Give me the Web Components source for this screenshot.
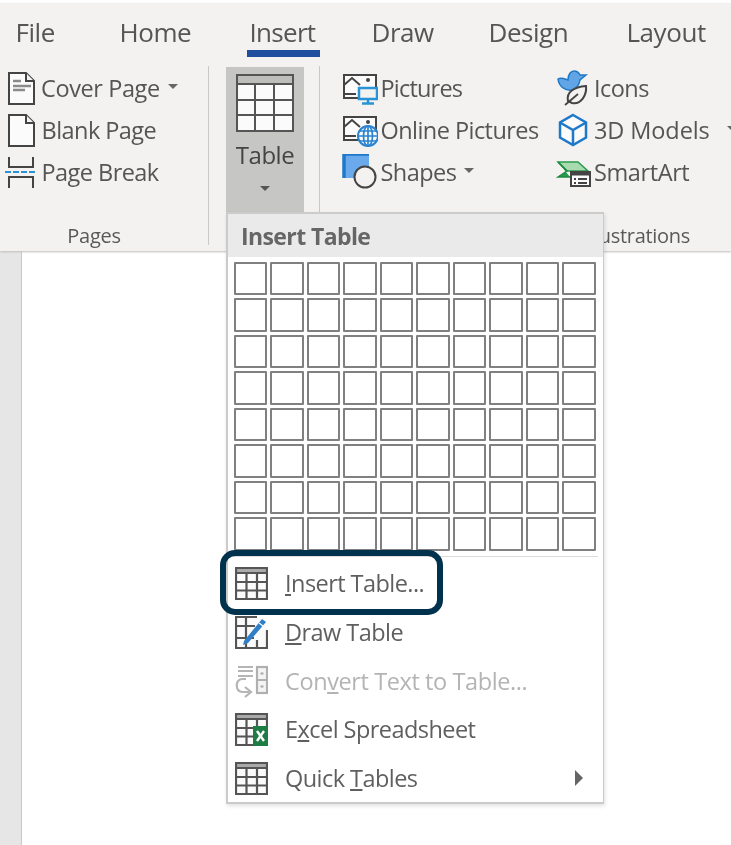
<!DOCTYPE html>
<html lang="en">
<head>
<meta charset="utf-8">
<title>Insert Table</title>
<style>
  html, body { margin: 0; background: #fff; }
  body { font-family: "Open Sans", "Noto Sans", "Liberation Sans", sans-serif; }
</style>
</head>
<body>
<word-app>
  <word-ribbon slot="ribbon">
    <ribbon-tab style="--w:104px">File</ribbon-tab>
    <ribbon-tab style="--w:130px">Home</ribbon-tab>
    <ribbon-tab style="--w:122px;--track:-.7px" active>Insert</ribbon-tab>
    <ribbon-tab style="--w:117px">Draw</ribbon-tab>
    <ribbon-tab style="--w:138px">Design</ribbon-tab>
    <ribbon-tab style="--w:90px">Layout</ribbon-tab>

    <ribbon-group slot="groups" label="Pages" style="--w:208px;--pad:5px;--col:auto" divider>
      <ribbon-item caret style="--icon:36px;--track:-.4px">
        <svg slot="icon" width="32" height="36" viewBox="0 0 32 36"><path d="M4 3h17l8 8v23H4z" fill="#fbfbfb" stroke="#444" stroke-width="2"/><path d="M21 3v8h8" fill="#f3f2f1" stroke="#444" stroke-width="2"/><path d="M8 11h8M8 16h18M8 20h12" stroke="#8a8a8a" stroke-width="2.5" fill="none"/></svg>
        Cover Page
      </ribbon-item>
      <ribbon-item style="--icon:36.500px">
        <svg slot="icon" width="32" height="36" viewBox="0 0 32 36"><path d="M4 3h17l8 8v23H4z" fill="#fbfbfb" stroke="#444" stroke-width="2"/><path d="M21 3v8h8" fill="#f3f2f1" stroke="#444" stroke-width="2"/></svg>
        Blank Page
      </ribbon-item>
      <ribbon-item style="--icon:36.500px">
        <svg slot="icon" width="32" height="36" viewBox="0 0 32 36"><path d="M4 3v10h24V3M4 34V23h24v11" fill="none" stroke="#444" stroke-width="2"/><path d="M0 18h31" stroke="#2a93d5" stroke-width="2" stroke-dasharray="6 2" fill="none"/></svg>
        Page Break
      </ribbon-item>
    </ribbon-group>

    <ribbon-group slot="groups" style="--w:110px;--pad:17px;--col:auto" divider>
      <table-button>Table</table-button>
    </ribbon-group>

    <ribbon-group slot="groups" label="Illustrations" style="--w:411px;--pad:22px;--col:214px auto;--label-end:41px">
      <ribbon-item style="--icon:38.500px;--track:-.8px">
        <svg slot="icon" width="36" height="36" viewBox="0 0 36 36"><path d="M2 5h32v23H2z" fill="#fbfbfb" stroke="#444" stroke-width="2"/><path d="M2 15l8-7 8 7M2 24h12" fill="none" stroke="#444" stroke-width="2"/><circle cx="26" cy="10" r="2" fill="#444"/><path d="M17 18h18v11H17z" fill="#f3f2f1" stroke="#2a93d5" stroke-width="2.5"/><path d="M26 29v4M20 33.500h12" stroke="#2a93d5" stroke-width="2.500" fill="none"/></svg>
        Pictures
      </ribbon-item>
      <ribbon-item style="--icon:38px">
        <svg slot="icon" width="36" height="36" viewBox="0 0 36 36"><path d="M2 9c3-2 7 0 10 1 0-6 3-9 6-9 3 0 5 2 6 4h6l-6 5c-1 6-5 9-8 10-8 1-13-4-14-11z" fill="#62a5e6" stroke="#1f78c8" stroke-width="1.500"/><path d="M12 31c-2-9 6-14 18-15 1 9-5 19-14 17z" fill="#f3f2f1" stroke="#444" stroke-width="2"/><path d="M9 35l13-11" stroke="#444" stroke-width="1.800"/></svg>
        Icons
      </ribbon-item>
      <ribbon-item style="--icon:38.500px">
        <svg slot="icon" width="36" height="36" viewBox="0 0 36 36"><path d="M2 5h32v23H2z" fill="#fbfbfb" stroke="#444" stroke-width="2"/><path d="M2 15l8-7 8 7M2 24h12" fill="none" stroke="#444" stroke-width="2"/><circle cx="26" cy="10" r="2" fill="#444"/><circle cx="26" cy="24" r="10" fill="#fbfbfb" stroke="#2a83d0" stroke-width="2"/><path d="M16 24h20M26 14v20M18 19h16M18 29h16" stroke="#2a83d0" stroke-width="1.700" fill="none"/><ellipse cx="26" cy="24" rx="4.500" ry="10" fill="none" stroke="#2a83d0" stroke-width="1.700"/></svg>
        Online Pictures
      </ribbon-item>
      <ribbon-item caret style="--icon:38px;--track:-.1px;--caret-gap:17px">
        <svg slot="icon" width="36" height="36" viewBox="0 0 36 36"><path d="M17 3L30 10.500V25.500L17 33L4 25.500V10.500z" fill="#fbfbfb" stroke="#1f78c8" stroke-width="2.500"/><path d="M4 10.500L17 18l13-7.500M17 18v15" fill="none" stroke="#1f78c8" stroke-width="2.500"/></svg>
        3D Models
      </ribbon-item>
      <ribbon-item caret style="--icon:38.500px">
        <svg slot="icon" width="36" height="36" viewBox="0 0 36 36"><path d="M2 0h25v24H2z" fill="#6aa9ec"/><path d="M2 0h25M2 0v24" stroke="#1f78c8" stroke-width="3.500" fill="none"/><circle cx="23" cy="23" r="10.500" fill="#f3f2f1" stroke="#444" stroke-width="2"/></svg>
        Shapes
      </ribbon-item>
      <ribbon-item style="--icon:38px;--track:-.4px">
        <svg slot="icon" width="36" height="36" viewBox="0 0 36 36"><path d="M2 8h20l10 9H11z" fill="#a8dcb0" stroke="#2a9a4d" stroke-width="1.500"/><path d="M2 8l9 9-9 6h12" fill="#2a9a4d" stroke="#1e8a3f" stroke-width="1.500"/><rect x="15" y="18" width="19" height="14" fill="#fbfbfb" stroke="#444" stroke-width="2"/><path d="M15 20h19" stroke="#444" stroke-width="3"/><path d="M18 25h2M22 25h9M18 29h2M22 29h9" stroke="#444" stroke-width="1.800"/></svg>
        SmartArt
      </ribbon-item>
    </ribbon-group>
  </word-ribbon>

  <insert-menu>
    <menu-item callout>
      <menu-glyph slot="icon" kind="table"></menu-glyph>
      <u>I</u>nsert Table...
    </menu-item>
    <menu-item>
      <menu-glyph slot="icon" kind="draw"></menu-glyph>
      <u>D</u>raw Table
    </menu-item>
    <menu-item disabled style="--track:-.4px">
      <menu-glyph slot="icon" kind="convert"></menu-glyph>
      Con<u>v</u>ert Text to Table...
    </menu-item>
    <menu-item>
      <menu-glyph slot="icon" kind="excel"></menu-glyph>
      E<u>x</u>cel Spreadsheet
    </menu-item>
    <menu-item submenu>
      <menu-glyph slot="icon" kind="table"></menu-glyph>
      Quick <u>T</u>ables
    </menu-item>
  </insert-menu>
</word-app>

<script>
function shadow(el, html) {
  el.attachShadow({ mode: 'open' }).innerHTML = html;
}

window.customElements.define('word-app', class extends HTMLElement {
  constructor() {
    super();
    shadow(this, `<style>
  :host {
    display: block;
    position: relative;
    overflow: hidden;
    width: 731px;
    height: 845px;
    padding-top: 3px;
    box-sizing: border-box;
    background: #fff;
    filter: blur(.3px);
  }
  .doc {
    display: flex;
    height: 594px;
  }
  .gutter {
    width: 21px;
    background: #e6e6e6;
    border-right: 1px solid #c8c8c8;
  }
</style>
<slot name="ribbon"></slot>
<div class="doc"><div class="gutter"></div></div>
<slot></slot>`);
  }
});

window.customElements.define('word-ribbon', class extends HTMLElement {
  constructor() {
    super();
    shadow(this, `<style>
  :host {
    display: block;
    height: 248px;
    background: #f3f2f1;
    box-shadow: 0 1px 2px #bdbdbd;
    position: relative;
  }
  .tabs {
    display: flex;
    height: 54px;
    padding-left: 16px;
  }
  .groups {
    display: flex;
    padding-top: 9px;
    height: 176px;
  }
</style>
<div class="tabs"><slot></slot></div>
<div class="groups"><slot name="groups"></slot></div>`);
  }
});

window.customElements.define('ribbon-tab', class extends HTMLElement {
  constructor() {
    super();
    shadow(this, `<style>
  :host {
    display: block;
    position: relative;
    flex: none;
    width: var(--w);
    font-size: 26px;
    line-height: 30px;
    letter-spacing: var(--track, -.45px);
    padding-top: 14px;
    margin-left: -.5px;
    margin-right: .5px;
    color: #555;
  }
  :host([active])::after {
    content: "";
    position: absolute;
    left: -2.500px;
    top: 47px;
    width: 73px;
    height: 7px;
    background: #1f4e9c;
  }
</style>
<slot></slot>`);
  }
});

window.customElements.define('ribbon-group', class extends HTMLElement {
  static get observedAttributes() { return ['label']; }
  constructor() {
    super();
    shadow(this, `<style>
  :host {
    display: flex;
    flex-direction: column;
    flex: none;
    box-sizing: border-box;
    width: var(--w);
    height: 179px;
    position: relative;
  }
  :host([divider]) {
    border-right: 1px solid #c8c8c6;
    width: calc(var(--w) + 1px);
  }
  .body {
    flex: 1;
    display: grid;
    grid-template-columns: var(--col);
    grid-template-rows: repeat(3, 42px);
    padding: 1px 0 0 var(--pad);
    align-content: start;
    grid-auto-flow: row;
  }
  .label {
    font-size: 20px;
    line-height: 28px;
    letter-spacing: -.3px;
    color: #595959;
    text-align: center;
    padding-right: var(--label-end, 20px);
    margin-bottom: -5px;
  }
  :host([label="Illustrations"]) .label { text-align: right; }
</style>
<div class="body"><slot></slot></div>
<div class="label"></div>`);
  }
  attributeChangedCallback(name, old, value) {
    this.shadowRoot.querySelector('.label').textContent = value;
  }
});

window.customElements.define('ribbon-item', class extends HTMLElement {
  constructor() {
    super();
    shadow(this, `<style>
  :host {
    display: flex;
    align-items: center;
    height: 42px;
    white-space: nowrap;
    font-size: 23.500px;
    letter-spacing: var(--track, -.55px);
    color: #555;
  }
  .icon {
    display: flex;
    flex: none;
    width: var(--icon);
    align-items: center;
  }
  .caret {
    display: none;
    flex: none;
    margin-left: var(--caret-gap, 8px);
    margin-top: -3px;
    border: 5px solid transparent;
    border-top: 5px solid #666;
    border-bottom: 0;
  }
  :host([caret]) .caret { display: block; }
</style>
<span class="icon"><slot name="icon"></slot></span>
<span><slot></slot></span>
<span class="caret"></span>`);
  }
});

window.customElements.define('table-button', class extends HTMLElement {
  constructor() {
    super();
    shadow(this, `<style>
  :host {
    display: flex;
    flex-direction: column;
    align-items: center;
    box-sizing: border-box;
    width: 78px;
    height: 145px;
    padding-top: 7px;
    background: #c6c6c5;
    font-size: 24px;
    letter-spacing: -.5px;
    line-height: 30px;
    color: #444;
  }
  svg { display: block; }
  .label { margin-top: 8px; }
  .caret {
    margin-top: 16px;
    border: 5px solid transparent;
    border-top: 5px solid #555;
    border-bottom: 0;
  }
</style>
<svg width="58" height="58" viewBox="0 0 58 58">
  <rect x="1" y="1" width="56" height="56" fill="#fbfbfb"/>
  <rect x="1" y="1" width="56" height="9" fill="#bdbdbc"/>
  <path d="M1 1h56v56H1zM1 10h56M1 26h56M1 41h56M19 10v47M38 10v47" fill="none" stroke="#555" stroke-width="2"/>
</svg>
<span class="label"><slot></slot></span>
<span class="caret"></span>`);
  }
});

window.customElements.define('insert-menu', class extends HTMLElement {
  constructor() {
    super();
    const cells = '<i></i>'.repeat(80);
    shadow(this, `<style>
  :host {
    display: block;
    position: absolute;
    left: 226px;
    top: 212px;
    width: 378px;
    height: 592px;
    box-sizing: border-box;
    background: #fff;
    border: 2px solid #cbcbcb;
    border-right-width: 1.500px;
    box-shadow: 1px 2px 4px rgba(0,0,0,.12);
  }
  .head {
    height: 43px;
    box-sizing: border-box;
    padding-left: 13px;
    background: #eaeaea;
    font-size: 23px;
    font-weight: 700;
    line-height: 45px;
    letter-spacing: -.6px;
    color: #666;
  }
  .grid {
    display: grid;
    grid-template-columns: repeat(10, 33.200px);
    grid-auto-rows: 33.200px;
    gap: 3.300px;
    padding: 5px 0 5px 6px;
  }
  .grid i {
    display: block;
    border: 2px solid #808080;
    border-radius: 1px;
  }
  .rule {
    height: 1px;
    margin: 0 5px;
    background: #dcdcdc;
  }
  .items { padding-top: 2px; }
</style>
<div class="head">Insert Table</div>
<div class="grid">${cells}</div>
<div class="rule"></div>
<div class="items"><slot></slot></div>`);
  }
});

window.customElements.define('menu-item', class extends HTMLElement {
  constructor() {
    super();
    shadow(this, `<style>
  :host {
    display: flex;
    position: relative;
    align-items: center;
    height: 48.800px;
    padding-left: 7px;
    white-space: nowrap;
    font-size: 23.500px;
    letter-spacing: var(--track, -.55px);
    color: #5f5f5f;
  }
  :host([disabled]) { color: #b4b4b4; }
  .icon {
    display: flex;
    flex: none;
    width: 50px;
    margin-top: 1px;
  }
  :host([submenu])::after {
    content: "";
    position: absolute;
    right: 20px;
    top: 16px;
    border: 8px solid transparent;
    border-left: 8px solid #666;
    border-right: 0;
  }
  :host([callout])::before {
    content: "";
    position: absolute;
    left: -8px;
    top: -9px;
    width: 223px;
    height: 65px;
    box-sizing: border-box;
    border: 6.500px solid #00324d;
    border-radius: 15px;
  }
</style>
<span class="icon"><slot name="icon"></slot></span>
<span><slot></slot></span>`);
  }
});

window.customElements.define('menu-glyph', class extends HTMLElement {
  constructor() {
    super();
    const frame = '<rect x="1" y="1" width="31" height="31" fill="#fbfbfb"/><rect x="1" y="1" width="31" height="5" fill="#aaa"/>';
    const lines = 'M1 1h31v31H1zM1 6h31M1 15h31M1 23.500h31M11.500 6v26M22 6v26';
    const art = {
      table: `${frame}<path d="${lines}" fill="none" stroke="#555" stroke-width="2.200"/>`,
      draw: `<rect x="1" y="1" width="31" height="31" fill="#fbfbfb"/><path d="M22 1H1v31h31V14M1 10h19M1 22h18M11 1v31M22 24v8" fill="none" stroke="#555" stroke-width="2.200"/><path d="M9 25L27 3l4 3-18 21-5 2z" fill="#2f7fc8"/><path d="M24 7l4 3" stroke="#fff" stroke-width="1.200"/>`,
      convert: `<path d="M3 2h15M3 6h15M3 11h15" fill="none" stroke="#b5b5b5" stroke-width="2"/><path d="M11 14H7c-7 1-7 12 0 13h7M10 22l6 5-6 5" fill="none" stroke="#b5b5b5" stroke-width="2.200"/><rect x="22" y="2" width="10" height="26" fill="#f4f4f4" stroke="#b0b0b0" stroke-width="2.200"/><path d="M22 15h10" stroke="#b0b0b0" stroke-width="2"/><path d="M25.500 8.500h3M25.500 21.500h3" stroke="#a8a8a8" stroke-width="2"/>`,
      excel: `${frame}<path d="${lines}" fill="none" stroke="#555" stroke-width="2.200"/><rect x="18" y="13" width="15" height="20" fill="#1e7d45"/><path d="M22 18l7 10M29 18l-7 10" stroke="#fff" stroke-width="2.400"/>`
    };
    shadow(this, `<style>
  :host { display: block; width: 33px; height: 33px; }
  svg { display: block; }
</style>
<svg width="33" height="33" viewBox="0 0 33 33">${art[this.getAttribute('kind')]}</svg>`);
  }
});
</script>
</body>
</html>
